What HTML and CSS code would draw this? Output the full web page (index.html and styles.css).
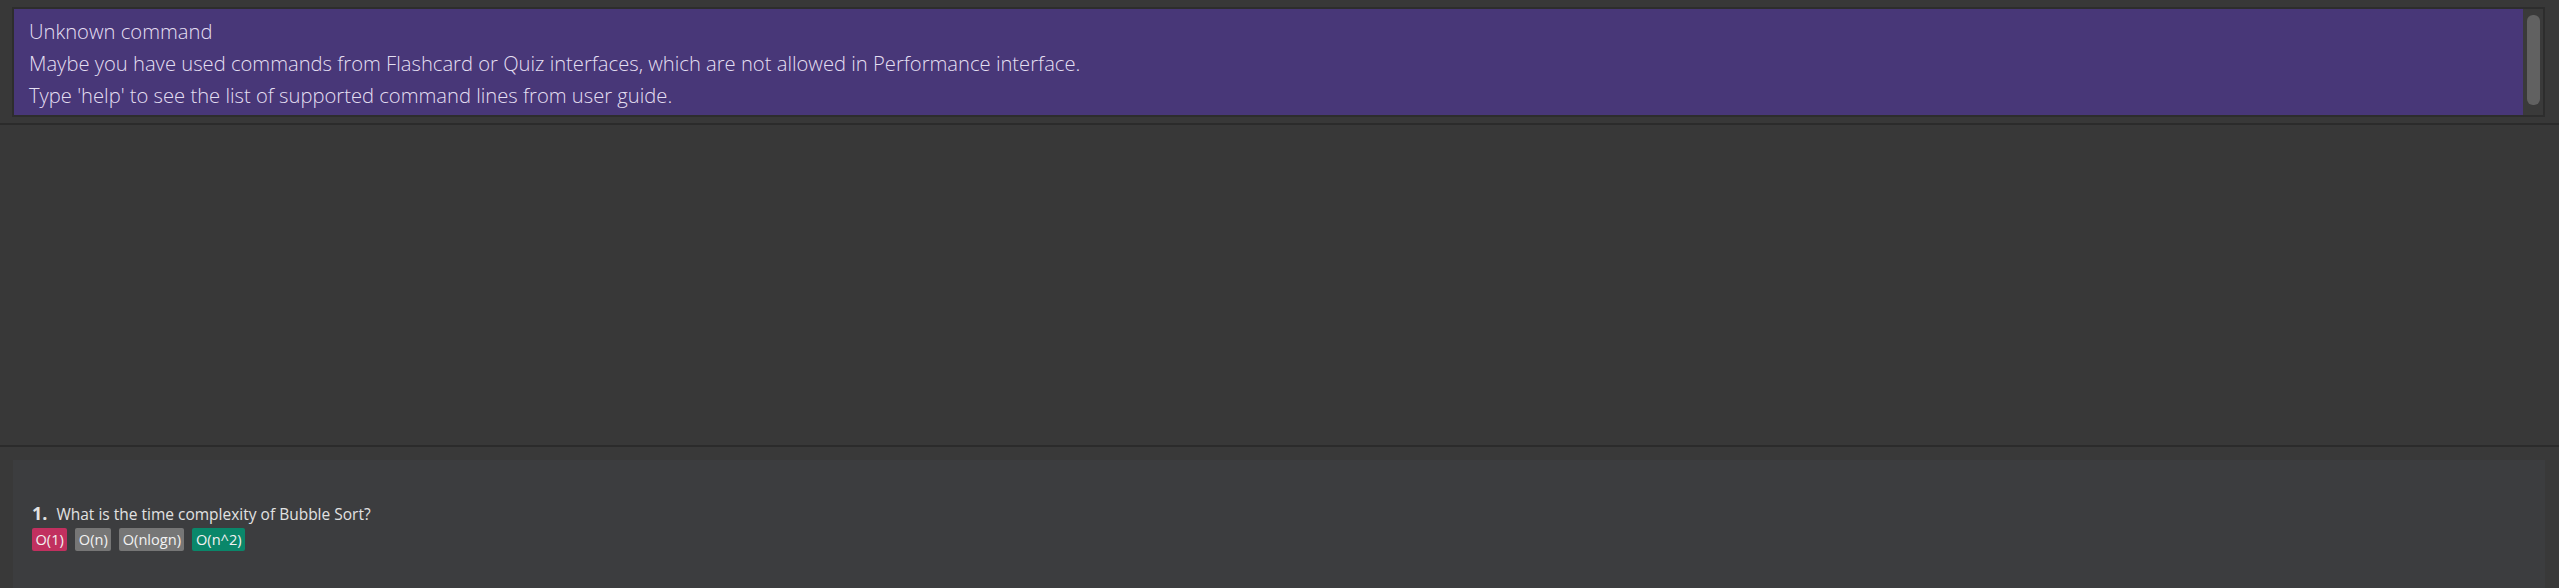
FILE: index.html
```html
<!DOCTYPE html>
<html>
<head>
<meta charset="utf-8">
<link rel="stylesheet" href="styles.css">
</head>
<body>
<div class="app">
  <section class="result-pane">
    <div class="result-box">
      <div class="result-text">
        <div>Unknown command</div>
        <div>Maybe you have used commands from Flashcard or Quiz interfaces, which are not allowed in Performance interface.</div>
        <div>Type 'help' to see the list of supported command lines from user guide.</div>
      </div>
      <div class="scroll-track"><div class="scroll-thumb"></div></div>
    </div>
  </section>
  <div class="divider"></div>
  <section class="middle-pane"></section>
  <div class="divider"></div>
  <section class="list-pane">
    <div class="card">
      <div class="question">
        <span class="qnum">1.</span>
        <span class="qtext">What is the time complexity of Bubble Sort?</span>
      </div>
      <div class="tags">
        <span class="tag tag-wrong">O(1)</span>
        <span class="tag tag-plain">O(n)</span>
        <span class="tag tag-plain">O(nlogn)</span>
        <span class="tag tag-right">O(n^2)</span>
      </div>
    </div>
  </section>
</div>
</body>
</html>
```
FILE: styles.css
```css
* { box-sizing: border-box; }
html, body {
  margin: 0;
  padding: 0;
  background: #383838;
  height: 588px;
  overflow: hidden;
}
.app {
  display: flex;
  flex-direction: column;
  height: 588px;
  font-family: "Open Sans", "Noto Sans", sans-serif;
}
.result-pane {
  height: 123px;
  padding: 7px 14px 0 12px;
}
.result-box {
  height: 110px;
  border: 2px solid #2d2d2d;
  background: #3a3a3a;
  display: flex;
}
.result-text {
  flex: 1;
  background: #483778;
  color: #e4dff2;
  font-size: 20.2px;
  font-weight: 300;
  line-height: 32px;
  padding: 6px 15px 0 15px;
}
.scroll-track {
  width: 20px;
  padding: 6px 3px 0 4px;
}
.scroll-thumb {
  width: 13px;
  height: 90px;
  background: #616161;
  border-radius: 6px;
}
.divider {
  height: 2px;
  background: #2b2b2b;
}
.middle-pane {
  height: 320px;
  background: #383838;
}
.list-pane {
  flex: 1;
  padding: 13px 14px 0 13px;
  background: #393939;
}
.card {
  height: 100%;
  background: #3c3d3f;
  padding: 41px 0 0 19px;
}
.question {
  display: flex;
  align-items: baseline;
  color: #e2e2e2;
}
.qnum {
  font-size: 18px;
  font-weight: 700;
  margin-right: 9px;
}
.qtext {
  font-size: 15.5px;
}
.tags {
  display: flex;
  gap: 8px;
  margin-top: 3px;
}
.tag {
  height: 23px;
  line-height: 23px;
  padding: 0 3.5px;
  border-radius: 2px;
  font-size: 14.6px;
  color: #f2f2f2;
}
.tag-wrong { background: #c1305f; }
.tag-plain { background: #767676; }
.tag-right { background: #0a876a; }
```
